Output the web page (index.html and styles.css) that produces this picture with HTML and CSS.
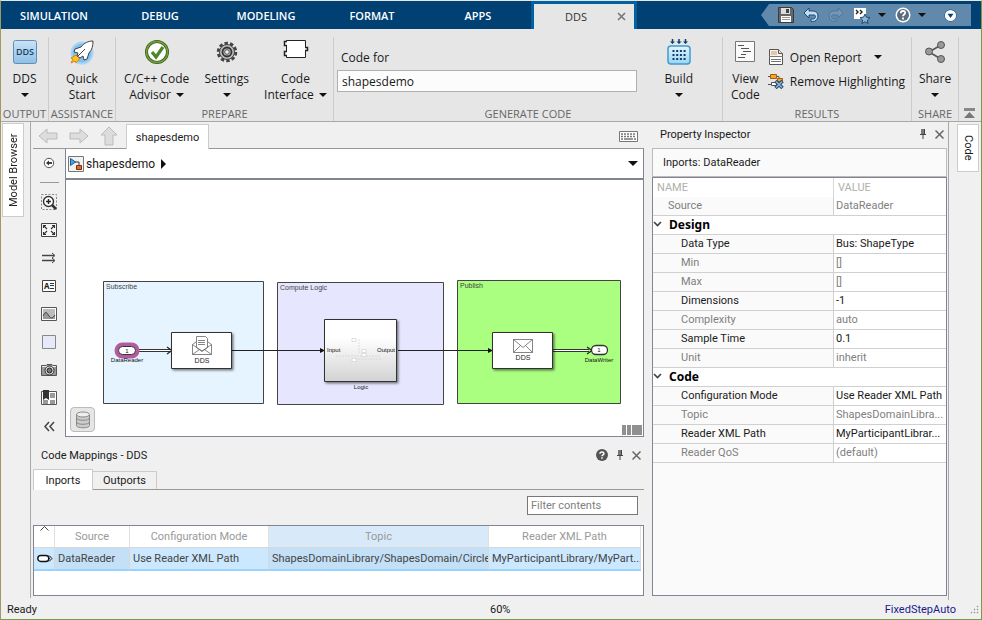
FILE: index.html
```html
<!DOCTYPE html>
<html lang="en">
<head>
    <meta charset="UTF-8">
    <title>shapesdemo</title>
    <link rel="stylesheet" href="styles.css">
</head>
<body>
    <header class="tabstrip">
        <nav class="main-tabs">
            <button class="main-tab">SIMULATION</button>
            <button class="main-tab">DEBUG</button>
            <button class="main-tab">MODELING</button>
            <button class="main-tab">FORMAT</button>
            <button class="main-tab">APPS</button>
            <div class="active-tab">
                <button class="active-name">DDS</button>
                <button class="icon-btn" aria-label="Close tab">
                    <svg width="9" height="9" viewBox="0 0 9 9"><path d="M1 1l7 7M8 1l-7 7" stroke="#777" stroke-width="1.6"/></svg>
                </button>
            </div>
        </nav>
        <div class="quick-access">
            <button class="icon-btn" aria-label="Save">
                <svg width="16" height="16" viewBox="0 0 16 16"><path d="M.5.5h13l2 2v13H.5z" fill="#666" stroke="#3a3a3a"/><path d="M3 1h9v6H3z" fill="#ddd"/><path d="M8 2h3v4H8z" fill="#444"/><path d="M3 9h10v6H3z" fill="#fff"/><path d="M4 10.500h8M4 12.500h8" stroke="#999"/></svg>
            </button>
            <button class="icon-btn" aria-label="Undo">
                <svg width="16" height="16" viewBox="0 0 16 16"><path d="M1 6l5-5v3h4c3 0 5 2 5 5s-2 5.500-5.500 5.500H8V12h1.500c2 0 3-1 3-2.500S11.500 8 10 8H6v3z" fill="#c4dff5" stroke="#1d4a75"/></svg>
            </button>
            <button class="icon-btn" aria-label="Redo">
                <svg width="16" height="16" viewBox="0 0 16 16"><path d="M15 6l-5-5v3H6C3 4 1 6 1 9s2 5.500 5.500 5.500H8V12H6.500c-2 0-3-1-3-2.500S4.500 8 6 8h4v3z" fill="#7397b6" stroke="#4f7699"/></svg>
            </button>
            <button class="icon-btn with-arrow" aria-label="Favorites">
                <svg width="18" height="17" viewBox="0 0 18 17"><path d="M1 1h12v11H1z" fill="#fff"/><path d="M3 3l2 2-2 2M7 3l2 2-2 2" fill="none" stroke="#222" stroke-width="1.400"/><path d="M12 7l1.500 3.200 3.500.4-2.600 2.400.7 3.500-3.100-1.700-3.100 1.700.7-3.500L7 10.600l3.500-.4z" fill="#8fb4d4" stroke="#204a70"/></svg>
                <i class="arrow"></i>
            </button>
            <button class="icon-btn with-arrow" aria-label="Help">
                <svg width="16" height="16" viewBox="0 0 16 16"><circle cx="8" cy="8" r="7.500" fill="#fff"/><circle cx="8" cy="8" r="6" fill="#5a6c80"/><path d="M5.800 6.200c0-3 4.600-2.800 4.400-.2C10.100 7.400 8 7.600 8 9.300M8 10.600v1.800" fill="none" stroke="#fff" stroke-width="1.800"/></svg>
                <i class="arrow"></i>
            </button>
            <button class="icon-btn more" aria-label="More">
                <svg width="13" height="13" viewBox="0 0 13 13"><circle cx="6.500" cy="6.500" r="6" fill="#0a4275"/><circle cx="6.500" cy="6.500" r="4.800" fill="#0a4275" stroke="#fff" stroke-width="1.600"/><circle cx="6.500" cy="6.500" r="4.800" fill="#fff"/><path d="M3.500 4.800h6l-3 4.200z" fill="#0a4275"/></svg>
            </button>
        </div>
    </header>

    <section class="ribbon">
        <div class="group">
            <div class="tools">
                <button class="tool">
                    <svg width="26" height="26" viewBox="0 0 26 26"><defs><linearGradient id="gDds" x1="0" y1="0" x2="0" y2="1"><stop offset="0" stop-color="#c9e4f8"/><stop offset="1" stop-color="#8fbfe4"/></linearGradient></defs><rect x="1.500" y="1.500" width="23" height="23" rx="2" fill="url(#gDds)" stroke="#5f8fb8"/><text x="13" y="16" class="dds-glyph">DDS</text></svg>
                    <span>DDS</span><i class="arrow"></i>
                </button>
            </div>
            <h3>OUTPUT</h3>
        </div>
        <div class="group">
            <div class="tools">
                <button class="tool">
                    <svg width="26" height="26" viewBox="0 0 26 26"><circle cx="13" cy="14" r="10.500" fill="#7fc0ef" stroke="#a9d6f5" stroke-width="2"/><path d="M7 16l-5 3 2 1-2 4 4-2 1 2 4-5z" fill="#ffc61a" stroke="#d9811e"/><path d="M24 2c-5 0-9 2-12 6l-6 2-1 3 4 1-1 3 3 2 3-2 1 4 3-1 2-6c3-3 4-7 4-12z" fill="#fff" stroke="#444"/><path d="M9 17l7-7" stroke="#444"/></svg>
                    <span>Quick</span><span>Start</span>
                </button>
            </div>
            <h3>ASSISTANCE</h3>
        </div>
        <div class="group">
            <div class="tools prepare">
                <button class="tool">
                    <svg width="26" height="26" viewBox="0 0 26 26"><circle cx="13" cy="13" r="10.500" fill="#fff" stroke="#3c5a20" stroke-width="3"/><circle cx="13" cy="13" r="10.500" fill="none" stroke="#6fa336" stroke-width="1.500"/><path d="M8 13l4 5 7-10" fill="none" stroke="#4d8527" stroke-width="3.200"/></svg>
                    <span>C/C++ Code</span><span>Advisor <i class="arrow"></i></span>
                </button>
                <button class="tool">
                    <svg width="26" height="26" viewBox="0 0 26 26"><circle cx="13" cy="13" r="8.500" fill="none" stroke="#444" stroke-width="3.500" stroke-dasharray="3.300 2.040"/><circle cx="13" cy="13" r="7.500" fill="#bbb" stroke="#444"/><circle cx="13" cy="13" r="4.500" fill="#bbb" stroke="#333" stroke-width="1.800"/><circle cx="13" cy="13" r="2.300" fill="#eee" stroke="#555"/></svg>
                    <span>Settings</span><i class="arrow"></i>
                </button>
                <button class="tool">
                    <svg width="26" height="26" viewBox="0 0 26 26"><path d="M3.500 1.500h19v17h-19z" fill="#fff" stroke="#222"/><path d="M4 2.500H1.500v4H4M4 12.500H1.500v4H4M22 8.500h2.500v3H22" fill="#fff" stroke="#222" stroke-width="1.500"/></svg>
                    <span>Code</span><span>Interface <i class="arrow"></i></span>
                </button>
            </div>
            <h3>PREPARE</h3>
        </div>
        <div class="group">
            <div class="tools generate">
                <div class="code-for">
                    <label for="codeFor">Code for</label>
                    <input type="text" id="codeFor" value="shapesdemo">
                </div>
                <button class="tool">
                    <svg width="26" height="26" viewBox="0 0 26 26"><defs><linearGradient id="gBuild" x1="0" y1="0" x2="0" y2="1"><stop offset="0" stop-color="#e4f5ff"/><stop offset="1" stop-color="#9ad4f4"/></linearGradient></defs><rect x="2" y="7" width="22" height="18" rx="3" fill="url(#gBuild)" stroke="#3f9ccc" stroke-width="1.500"/><path d="M6.500 0v4M13 0v4M19.500 0v4" stroke="#0d3e6e" stroke-width="1.500"/><path d="M4 2.500h5L6.500 5zM10.500 2.500h5L13 5zM17 2.500h5L19.500 5z" fill="#0d3e6e"/><path d="M6.500 12h14M6.500 16h14M6.500 20h14" stroke="#0d3e6e" stroke-width="2" stroke-dasharray="2 1.700"/></svg>
                    <span>Build</span><i class="arrow"></i>
                </button>
            </div>
            <h3>GENERATE CODE</h3>
        </div>
        <div class="group">
            <div class="tools results">
                <button class="tool">
                    <svg width="26" height="26" viewBox="0 0 26 26"><path d="M3.500 2.500h19v20h-19z" fill="#fafafa" stroke="#777"/><path d="M6 6.500h6M9 9.500h8M11 12.500h8M9 15.500h5M6 18.500h7" stroke="#555"/></svg>
                    <span>View</span><span>Code</span>
                </button>
                <div class="wide-tools">
                    <button class="wide-tool">
                        <svg width="16" height="16" viewBox="0 0 16 16"><path d="M1.500.5h9l4 4v11h-13z" fill="#f4f4f4" stroke="#555"/><path d="M10.500.5v4h4" fill="#ddd" stroke="#555"/><path d="M3 3h6M3 5h6" stroke="#d99a4e"/><path d="M2 7h12v8H2z" fill="#fff"/><path d="M1 7.500h14M3 10.500h10M3 12.500h10" stroke="#777"/></svg>
                        Open Report <i class="arrow"></i>
                    </button>
                    <button class="wide-tool">
                        <svg width="16" height="16" viewBox="0 0 16 16"><path d="M0 3.500h3M8 3.500h3v4h3M0 11.500h3" fill="none" stroke="#555"/><path d="M2.500 1.500h6v4h-6z" fill="#f5a623" stroke="#a65b12"/><path d="M9.500 5.500h5v3h-5z" fill="#f5a623" stroke="#a65b12"/><path d="M3.500 9.500h5v3h-5z" fill="#fff" stroke="#555"/><path d="M7.500 8l7 7M14.500 8l-7 7" stroke="#23486d" stroke-width="3.500"/><path d="M8 8.500l6 6M14 8.500l-6 6" stroke="#8ab6dc" stroke-width="1.600"/></svg>
                        Remove Highlighting
                    </button>
                </div>
            </div>
            <h3>RESULTS</h3>
        </div>
        <div class="group">
            <div class="tools">
                <button class="tool">
                    <svg width="26" height="26" viewBox="0 0 26 26"><path d="M19 6L7 13l12 7" fill="none" stroke="#555" stroke-width="1.600"/><g fill="#999" stroke="#555"><circle cx="19" cy="6" r="3.500"/><circle cx="7" cy="12.500" r="3.500"/><circle cx="19" cy="20" r="3.500"/></g></svg>
                    <span>Share</span><i class="arrow"></i>
                </button>
            </div>
            <h3>SHARE</h3>
        </div>
        <div class="collapse">
            <button class="icon-btn" aria-label="Minimize toolstrip">
                <svg width="11" height="12" viewBox="0 0 11 12"><path d="M0 1.500h11" stroke="#888" stroke-width="3"/><path d="M0 10l5.500-6L11 10z" fill="#777"/></svg>
            </button>
        </div>
    </section>

    <main class="workspace">
        <aside class="rail rail-left"><button class="side-tab side-tab-up">Model Browser</button></aside>

        <section class="center">
            <div class="nav-row">
                <button class="icon-btn" aria-label="Back"><svg width="20" height="18" viewBox="0 0 20 18"><path d="M1 9l8-7v4h10v6H9v4z" fill="#ddd" stroke="#bbb"/></svg></button>
                <button class="icon-btn" aria-label="Forward"><svg width="20" height="18" viewBox="0 0 20 18"><path d="M19 9l-8-7v4H1v6h10v4z" fill="#ddd" stroke="#bbb"/></svg></button>
                <button class="icon-btn" aria-label="Up to parent"><svg width="18" height="20" viewBox="0 0 18 20"><path d="M9 1l8 8h-4v10H5V9H1z" fill="#ddd" stroke="#bbb"/></svg></button>
                <button class="model-tab">shapesdemo</button>
                <button class="icon-btn keyboard" aria-label="Keyboard shortcuts"><svg width="19" height="11" viewBox="0 0 19 11"><path d="M.5.5h18v10H.5z" fill="#fff" stroke="#777"/><path d="M2 3h15M2 5.500h15" stroke="#777" stroke-width="1.500" stroke-dasharray="2 1"/><path d="M2 8h2M5 8h9M15 8h2" stroke="#777" stroke-width="1.500"/></svg></button>
            </div>

            <div class="editor">
                <div class="palette">
                    <button class="icon-btn" aria-label="Hide browser"><svg width="18" height="18" viewBox="0 0 18 18"><circle cx="9" cy="9" r="4.700" fill="#fff" stroke="#555"/><path d="M6 9l3-2.500v5z" fill="#333"/><path d="M8 9h4" stroke="#333" stroke-width="1.800"/></svg></button>
                    <hr>
                    <button class="icon-btn" aria-label="Zoom"><svg width="18" height="18" viewBox="0 0 18 18"><path d="M1.500 1.500h15v15h-15z" fill="none" stroke="#888" stroke-dasharray="2 1.500"/><circle cx="8.500" cy="8.500" r="5" fill="#fff" stroke="#333" stroke-width="1.400"/><path d="M6 8.500h5M8.500 6v5" stroke="#222" stroke-width="1.400"/><path d="M12 12l4 4" stroke="#333" stroke-width="2.500"/></svg></button>
                    <button class="icon-btn" aria-label="Fit to view"><svg width="18" height="18" viewBox="0 0 18 18"><path d="M1.500 2.500h15v13h-15z" fill="#f6f6f6" stroke="#444"/><path d="M3.500 7V4.500H6M14.500 7V4.500H12M3.500 11v2.500H6M14.500 11v2.500H12M4 5l3 3M14 5l-3 3M4 13l3-3M14 13l-3-3" fill="none" stroke="#333" stroke-width="1.100"/></svg></button>
                    <button class="icon-btn" aria-label="Sample time"><svg width="18" height="18" viewBox="0 0 18 18"><path d="M2 6.500h12M2 11.500h12" stroke="#444" stroke-width="1.300"/><path d="M12 4l3 2.500L12 9M12 9l3 2.500-3 2.500" fill="none" stroke="#444"/></svg></button>
                    <button class="icon-btn" aria-label="Annotation"><svg width="18" height="18" viewBox="0 0 18 18"><path d="M2.500 3.500h13v11h-13z" fill="#fff" stroke="#444"/><text x="4" y="12" class="note-glyph">A</text><path d="M10 6.500h4M10 8.500h4M10 11.500h4" stroke="#333"/></svg></button>
                    <button class="icon-btn" aria-label="Image"><svg width="18" height="18" viewBox="0 0 18 18"><path d="M1.500 2.500h15v13h-15z" fill="#fff" stroke="#555"/><path d="M3 4h12v10H3z" fill="#bbb"/><path d="M3 11c3-6 4-3 6 0s4 2 6-1v4H3z" fill="#999"/><path d="M3 11c3-6 4-3 6 0s4 2 6-1" fill="none" stroke="#444"/></svg></button>
                    <button class="icon-btn" aria-label="Area"><svg width="18" height="18" viewBox="0 0 18 18"><path d="M2.500 2.500h13v13h-13z" fill="#e8e8fb" stroke="#888"/></svg></button>
                    <button class="icon-btn" aria-label="Screenshot"><svg width="18" height="18" viewBox="0 0 18 18"><path d="M1.500 4.500H6l1-1h5l1 1h3.500v10h-15z" fill="#999" stroke="#555"/><path d="M2 5.500h14" stroke="#eee"/><circle cx="9.500" cy="9.500" r="4.500" fill="#ddd" stroke="#333"/><circle cx="9.500" cy="9.500" r="2.500" fill="#777" stroke="#222"/></svg></button>
                    <button class="icon-btn" aria-label="Views"><svg width="18" height="18" viewBox="0 0 18 18"><path d="M1.500 2.500h15v13h-15z" fill="#fff" stroke="#555"/><path d="M10 4h5v5h-5zM10 11h5v4h-5zM3 11h5v4H3z" fill="#999"/><path d="M3 1h6v10l-3-2-3 2z" fill="#333"/></svg></button>
                    <button class="icon-btn" aria-label="Collapse"><svg width="18" height="18" viewBox="0 0 18 18"><path d="M9 5L5 9.500 9 14M14 5l-4 4.500L14 14" fill="none" stroke="#444" stroke-width="1.500"/></svg></button>
                </div>

                <div class="canvas-frame">
                    <div class="path-bar">
                        <svg width="16" height="16" viewBox="0 0 16 16"><path d="M.5.5h15v15H.5z" fill="#f2f2f2" stroke="#777"/><path d="M2.500 2.500v7l5-3.500z" fill="#4aa3df" stroke="#1e5a94"/><path d="M7 6h4v3" fill="none" stroke="#333"/><path d="M8.500 9.500h5v4h-5z" fill="#d9692e" stroke="#7a3210"/></svg>
                        <a href="#">shapesdemo</a>
                        <i class="arrow-right"></i>
                        <button class="icon-btn path-menu" aria-label="Show path"><i class="arrow"></i></button>
                    </div>
                    <div class="canvas">
                        <svg class="diagram" viewBox="66 181 577 255">
                            <defs>
                                <linearGradient id="gBlock" x1="0" y1="0" x2="0" y2="1"><stop offset=".3" stop-color="#fff"/><stop offset="1" stop-color="#d2d2d2"/></linearGradient>
                                <filter id="soft" x="-10%" y="-10%" width="125%" height="125%"><feDropShadow dx="1.500" dy="1.500" stdDeviation="0.800" flood-opacity=".5"/></filter>
                            </defs>
                            <g stroke="#444">
                                <path d="M103.500 281.500h160v122h-160z" fill="#e6f4ff"/>
                                <path d="M277.500 282.500h166v122h-166z" fill="#e6e6ff"/>
                                <path d="M457.500 280.500h163v123h-163z" fill="#aaff80"/>
                            </g>
                            <text x="106" y="289" class="area-name">Subscribe</text>
                            <text x="280" y="290" class="area-name">Compute Logic</text>
                            <text x="460" y="288" class="area-name">Publish</text>

                            <path d="M232 350.500h89M398 350.500h91" stroke="#222"/>
                            <path d="M320 348l5 2.500-5 2.500zM488 348l5 2.500-5 2.500z" fill="#111"/>
                            <path d="M138 349.500h32M138 351.500h32M553 349.500h36M553 351.500h36" stroke="#333"/>
                            <path d="M137 350.500h32M554 350.500h34" stroke="#fff"/>
                            <path d="M167 347l5 3.500-5 3.500M587 347l5 3.500-5 3.500" fill="none" stroke="#222" stroke-width="1.200"/>

                            <g stroke="#333" fill="#fff" filter="url(#soft)">
                                <path d="M171.500 332.500h60v36h-60z"/>
                                <path d="M492.500 332.500h60v36h-60z"/>
                                <path d="M324.500 319.500h72v62h-72z" fill="url(#gBlock)"/>
                            </g>
                            <g fill="#fff" stroke="#666" stroke-width=".8">
                                <path d="M192.500 344.500l9.500-7 9.500 7v10h-19z"/>
                                <path d="M196.500 336.500h9l2 2v9l-5.500 4-5.500-4z"/>
                                <path d="M198 340.500h7M198 342.500h7M198 344.500h7M192.500 344.500l7 5-7 5M211.500 344.500l-7 5 7 5M199 349l3 2 3-2" fill="none"/>
                                <path d="M513.500 339.500h19v13h-19z"/>
                                <path d="M513.500 339.500l9.500 8 9.500-8M513.500 352.500l7-7M532.500 352.500l-7-7" fill="none"/>
                            </g>
                            <text x="202" y="363" class="block-name">DDS</text>
                            <text x="523" y="360" class="block-name">DDS</text>

                            <g fill="#fff" stroke="#ccc" stroke-width=".6">
                                <path d="M359 339v14M336 356h45M355 359h26" stroke-dasharray="2 1"/>
                                <path d="M352 338.500h4v3h-4zM362 349.500h4v3h-4zM362 353.500h4v3h-4zM352 358.500h4v3h-4z"/>
                            </g>
                            <text x="327" y="352" class="port">Input</text>
                            <text x="395" y="352" class="port port-end">Output</text>
                            <text x="361" y="389" class="port port-mid">Logic</text>

                            <rect x="117" y="345" width="20" height="11" rx="5.500" fill="#fff" stroke="#b45aa0" stroke-width="5"/>
                            <rect x="118.500" y="346.500" width="17" height="8" rx="4" fill="#fff" stroke="#333"/>
                            <rect x="591.500" y="345.500" width="16" height="9" rx="4.500" fill="#fff" stroke="#333" stroke-width="1.300"/>
                            <text x="127" y="353" class="port port-mid">1</text>
                            <text x="599" y="352" class="port port-mid">1</text>
                            <text x="127" y="362" class="port port-mid">DataReader</text>
                            <text x="599" y="362" class="port port-mid">DataWriter</text>
                        </svg>
                        <button class="data-btn" aria-label="Model data">
                            <svg width="16" height="18" viewBox="0 0 16 18"><path d="M1.500 3.500v11c0 3 13 3 13 0v-11" fill="#ccc" stroke="#888"/><ellipse cx="8" cy="3.500" rx="6.500" ry="2.500" fill="#eee" stroke="#888"/><path d="M1.500 7c0 3 13 3 13 0M1.500 11c0 3 13 3 13 0" fill="none" stroke="#888"/></svg>
                        </button>
                        <svg class="view-marks" width="20" height="10" viewBox="0 0 20 10"><path d="M0 0h4v10H0zM5 0h4v10H5zM10 0h10v10H10z" fill="#909090"/></svg>
                    </div>
                </div>
            </div>

            <div class="panel-title">
                <h2>Code Mappings - DDS</h2>
                <button class="icon-btn" aria-label="Help"><svg width="12" height="12" viewBox="0 0 12 12"><circle cx="6" cy="6" r="6" fill="#555"/><path d="M4 4.700c0-2.400 4-2.200 3.900-.1C7.800 5.800 6 5.800 6 7.200M6 8.300v1.500" fill="none" stroke="#fff" stroke-width="1.500"/></svg></button>
                <button class="icon-btn" aria-label="Pin"><svg width="8" height="12" viewBox="0 0 8 12"><path d="M2 1h4v5H2z" fill="#777"/><path d="M1 6.500h6M4 7v4M5.500 1v5" stroke="#444"/></svg></button>
                <button class="icon-btn" aria-label="Close"><svg width="9" height="9" viewBox="0 0 9 9"><path d="M.5.5l8 8M8.500.5l-8 8" stroke="#666" stroke-width="1.500"/></svg></button>
            </div>
            <div class="mapping-tabs">
                <button class="mapping-tab selected">Inports</button>
                <button class="mapping-tab">Outports</button>
            </div>
            <div class="filter-row">
                <input type="text" class="filter" placeholder="Filter contents" aria-label="Filter contents">
            </div>
            <div class="mapping-box">
                <table class="mappings">
                    <colgroup><col class="c-icon"><col class="c-source"><col class="c-mode"><col class="c-topic"><col></colgroup>
                    <thead>
                        <tr>
                            <th class="sort"><svg width="9" height="5" viewBox="0 0 9 5"><path d="M.5 4.500l4-4 4 4" fill="none" stroke="#444"/></svg></th>
                            <th>Source</th>
                            <th>Configuration Mode</th>
                            <th class="hot">Topic</th>
                            <th>Reader XML Path</th>
                        </tr>
                    </thead>
                    <tbody>
                        <tr>
                            <td class="port-icon"><svg width="16" height="9" viewBox="0 0 16 9"><rect x=".8" y="1.500" width="11" height="6" rx="3" fill="#fff" stroke="#111" stroke-width="1.400"/><path d="M12 1.500l3 3-3 3M11 3l1.500 1.500L11 6" fill="none" stroke="#111"/></svg></td>
                            <td class="hot">DataReader</td>
                            <td>Use Reader XML Path</td>
                            <td class="hot">ShapesDomainLibrary/ShapesDomain/Circle</td>
                            <td>MyParticipantLibrary/MyPart...</td>
                        </tr>
                    </tbody>
                </table>
            </div>
        </section>

        <section class="inspector">
            <div class="panel-title inspector-title">
                <h2>Property Inspector</h2>
                <button class="icon-btn" aria-label="Pin"><svg width="8" height="12" viewBox="0 0 8 12"><path d="M2 1h4v5H2z" fill="#777"/><path d="M1 6.500h6M4 7v4M5.500 1v5" stroke="#444"/></svg></button>
                <button class="icon-btn" aria-label="Close"><svg width="9" height="9" viewBox="0 0 9 9"><path d="M.5.5l8 8M8.500.5l-8 8" stroke="#666" stroke-width="1.500"/></svg></button>
            </div>
            <div class="object-name">Inports: DataReader</div>
            <div class="prop-box">
                <table class="props">
                    <colgroup><col class="c-name"><col></colgroup>
                    <thead><tr><th>NAME</th><th>VALUE</th></tr></thead>
                    <tbody>
                        <tr class="locked top"><td>Source</td><td>DataReader</td></tr>
                        <tr class="section"><th colspan="2"><svg width="9" height="6" viewBox="0 0 9 6"><path d="M1 1l3.500 3.500L8 1" fill="none" stroke="#444" stroke-width="1.700"/></svg>Design</th></tr>
                        <tr><td>Data Type</td><td>Bus: ShapeType</td></tr>
                        <tr class="locked"><td>Min</td><td>[]</td></tr>
                        <tr class="locked"><td>Max</td><td>[]</td></tr>
                        <tr><td>Dimensions</td><td>-1</td></tr>
                        <tr class="locked"><td>Complexity</td><td>auto</td></tr>
                        <tr><td>Sample Time</td><td>0.1</td></tr>
                        <tr class="locked"><td>Unit</td><td>inherit</td></tr>
                        <tr class="section"><th colspan="2"><svg width="9" height="6" viewBox="0 0 9 6"><path d="M1 1l3.500 3.500L8 1" fill="none" stroke="#444" stroke-width="1.700"/></svg>Code</th></tr>
                        <tr><td>Configuration Mode</td><td>Use Reader XML Path</td></tr>
                        <tr class="locked"><td>Topic</td><td>ShapesDomainLibra...</td></tr>
                        <tr><td>Reader XML Path</td><td>MyParticipantLibrar...</td></tr>
                        <tr class="locked"><td>Reader QoS</td><td>(default)</td></tr>
                    </tbody>
                </table>
            </div>
        </section>

        <aside class="rail rail-right"><button class="side-tab">Code</button></aside>
    </main>

    <footer class="status">
        <span class="message">Ready</span>
        <span class="zoom-level">60%</span>
        <a href="#" class="solver">FixedStepAuto</a>
        <svg width="9" height="9" viewBox="0 0 9 9"><path d="M7 1h1v1H7zM4 4h1v1H4zM7 4h1v1H7zM1 7h1v1H1zM4 7h1v1H4zM7 7h1v1H7z" fill="#999" stroke="#999" stroke-width=".5"/></svg>
    </footer>
</body>
</html>
```

FILE: styles.css
```css
* {
    box-sizing: border-box;
}
body {
    margin: 0;
    min-height: 100vh;
    display: flex;
    flex-direction: column;
    border: 1px solid #7a9a45;
    border-left-color: #a09a5c;
    border-top-color: #e6e6e6;
    background: #f0f0f0;
    color: #1a1a1a;
    font-family: Roboto, "Noto Sans", sans-serif;
    font-size: 11px;
}
button, input {
    font: inherit;
    color: inherit;
}
button {
    background: none;
    border: none;
    padding: 0;
    cursor: pointer;
}
h2, h3 {
    margin: 0;
    font-size: inherit;
    font-weight: normal;
}
svg {
    display: block;
    flex: none;
}
.icon-btn {
    display: flex;
    align-items: center;
    justify-content: center;
}
.arrow {
    display: inline-block;
    border: 4px solid transparent;
    border-top-color: #111;
    border-bottom-width: 0;
}
.arrow-right {
    border: 5px solid transparent;
    border-left-color: #111;
    border-right-width: 0;
}

/* top tabs */
.tabstrip {
    display: flex;
    justify-content: space-between;
    height: 28px;
    background: #004073;
    color: #fff;
    font-family: "Open Sans", sans-serif;
}
.main-tabs {
    display: flex;
}
.main-tab {
    width: 106px;
    font-weight: 600;
}
.active-tab {
    display: flex;
    align-items: center;
    width: 106px;
    padding: 0 8px 0 31px;
    border: 3px solid #0062a0;
    border-bottom: none;
    background: #e6e6e6;
    color: #333;
    justify-content: space-between;
}
.quick-access {
    display: flex;
    align-items: center;
    gap: 9px;
    width: 210px;
    height: 22px;
    margin: 3px 10px 0 0;
    padding: 0 14px 0 17px;
    background: #6189ab;
    clip-path: polygon(8px 0, 100% 0, 100% 100%, 8px 100%, 0 50%);
}
.with-arrow {
    gap: 7px;
}
.more {
    margin-left: auto;
}

/* ribbon */
.ribbon {
    display: grid;
    grid-template-columns: 48px 67px 218px minmax(0, 1fr) 189px 47px 22px;
    height: 93px;
    padding-top: 8px;
    border-bottom: 1px solid #a8a8a8;
    background: #e6e6e6;
    font-family: "Open Sans", sans-serif;
    font-size: 12px;
}
.group {
    display: flex;
    flex-direction: column;
    border-right: 1px solid #ccc;
}
.group h3 {
    color: #666;
    font-size: 11px;
    text-align: center;
    line-height: 14px;
    white-space: nowrap;
}
.tools {
    flex: 1;
    display: flex;
    justify-content: center;
}
.tool {
    display: flex;
    flex-direction: column;
    align-items: center;
    justify-content: flex-start;
    padding-top: 2px;
    line-height: 16px;
    white-space: nowrap;
}
.tool svg {
    margin-bottom: 6px;
}
.tool > .arrow {
    margin-top: 6px;
}
.tool span .arrow {
    margin: 0 0 2px 2px;
}
.dds-glyph {
    font: 600 9px "Open Sans", sans-serif;
    fill: #173f66;
    text-anchor: middle;
}
.prepare {
    justify-content: space-between;
    padding: 0 6px 0 8px;
}
.generate {
    justify-content: space-between;
    padding: 0 29px 0 3px;
}
.code-for {
    flex: 1;
    max-width: 300px;
    padding-top: 12px;
}
.code-for label {
    display: block;
    padding-left: 4px;
    line-height: 18px;
}
.code-for input {
    width: 100%;
    height: 22px;
    margin-top: 3px;
    padding: 0 4px;
    border: 1px solid #b0b0b0;
    background: #fcfcfc;
}
.results {
    justify-content: flex-start;
    padding-left: 8px;
    gap: 8px;
}
.wide-tools {
    padding-top: 8px;
}
.wide-tool {
    display: flex;
    align-items: center;
    gap: 6px;
    height: 24px;
    white-space: nowrap;
}
.wide-tool .arrow {
    margin-left: 6px;
}
.collapse {
    display: flex;
    align-items: flex-end;
    justify-content: center;
    padding: 0 2px 1px 0;
}

/* workspace */
.workspace {
    flex: 1;
    display: grid;
    grid-template-columns: 30px minmax(0, 1fr) 302px 32px;
}
.rail-left {
    margin-bottom: 2px;
    border-right: 1px solid #a8a8a8;
    padding: 1px 0 0 1px;
}
.rail-right {
    padding: 2px 0 0 8px;
}
.side-tab {
    writing-mode: vertical-rl;
    width: 22px;
    height: 48px;
    border: 1px solid #ccc;
    background: #fff;
    text-align: center;
}
.side-tab-up {
    height: 94px;
    transform: rotate(180deg);
}
.center {
    display: flex;
    flex-direction: column;
    min-width: 0;
    padding: 0 3px 4px 2px;
}
.nav-row {
    display: flex;
    align-items: center;
    gap: 11px;
    height: 27px;
    padding: 2px 6px 0 5px;
    border-bottom: 1px solid #999;
}
.model-tab {
    align-self: stretch;
    width: 83px;
    margin: 0 0 -1px -3px;
    border: 1px solid #ccc;
    border-bottom: none;
    background: #fff;
}
.keyboard {
    margin-left: auto;
}
.editor {
    flex: 1;
    display: flex;
}
.palette {
    display: flex;
    flex-direction: column;
    gap: 10px;
    align-items: center;
    width: 32px;
    padding-top: 5px;
}
.palette hr {
    width: 19px;
    margin: 0;
    border: none;
    border-top: 1px solid #999;
}
.note-glyph {
    font: bold 8px "Noto Sans", sans-serif;
    fill: #222;
}
.canvas-frame {
    flex: 1;
    display: flex;
    flex-direction: column;
    min-width: 0;
    border: 1px solid #808591;
    border-top: none;
    background: #fff;
}
.path-bar {
    display: flex;
    align-items: center;
    gap: 2px;
    height: 31px;
    padding: 0 5px 0 2px;
    border-bottom: 2px solid #808591;
    font-size: 12px;
}
.path-bar a {
    color: #1a1a1a;
    text-decoration: none;
}
.path-bar .arrow-right {
    margin-left: 4px;
}
.path-menu {
    margin-left: auto;
}
.path-menu .arrow {
    border-width: 5px 5px 0;
}
.canvas {
    position: relative;
    flex: 1;
    display: flex;
    align-items: flex-end;
}
.diagram {
    width: 100%;
    font-family: "Liberation Sans", Arial, sans-serif;
}
.area-name {
    font-size: 7px;
    fill: #444;
}
.block-name {
    font-size: 7px;
    fill: #222;
    text-anchor: middle;
}
.port {
    font-size: 6px;
    fill: #111;
}
.port-mid {
    text-anchor: middle;
}
.port-end {
    text-anchor: end;
}
.data-btn {
    position: absolute;
    left: 4px;
    bottom: 4px;
    width: 25px;
    height: 25px;
    padding: 3px 4px;
    border: 1px solid #bbb;
    border-radius: 4px;
    background: #e6e6e6;
}
.view-marks {
    position: absolute;
    right: 1px;
    bottom: 1px;
}

/* code mappings */
.panel-title {
    display: flex;
    align-items: center;
    gap: 8px;
    height: 32px;
    padding: 4px 3px 0 8px;
}
.panel-title h2 {
    flex: 1;
}
.mapping-tabs {
    display: flex;
    align-items: flex-end;
    height: 21px;
    border-bottom: 1px solid #999;
}
.mapping-tab {
    width: 64px;
    height: 18px;
    border: 1px solid #ccc;
    border-left: none;
    border-bottom: none;
}
.mapping-tab.selected {
    width: 60px;
    height: 21px;
    margin-bottom: -1px;
    border-left: 1px solid #ccc;
    background: #fff;
}
.filter-row {
    display: flex;
    justify-content: flex-end;
    padding: 6px 6px 10px;
}
.filter {
    width: 111px;
    height: 19px;
    padding: 0 3px;
    border: 1px solid #777;
    background: #fff;
}
.filter::placeholder {
    color: #808080;
}
.mapping-box {
    height: 71px;
    padding-right: 2px;
    border: 1px solid #808591;
    background: #fff;
}
table {
    width: 100%;
    table-layout: fixed;
    border-collapse: separate;
    border-spacing: 0;
}
th {
    font-weight: normal;
}
th, td {
    padding: 0;
    overflow: hidden;
    white-space: nowrap;
}
.c-icon {
    width: 21px;
}
.c-source {
    width: 75px;
}
.c-mode {
    width: 139px;
}
.c-topic {
    width: 220px;
}
.mappings th {
    height: 22px;
    border-right: 1px solid #e0e0e0;
    border-bottom: 1px solid #d8d8d8;
    color: #999;
}
.mappings th.hot {
    background: #d8eaf9;
}
.mappings th.sort {
    vertical-align: top;
}
.sort svg {
    margin: 0 auto;
}
.mappings td {
    height: 23px;
    padding-left: 3px;
    border-right: 1px solid #d8d8d8;
    border-bottom: 2px solid #99d1ff;
    background: #cce8ff;
    color: #444;
}
.mappings td.hot {
    background: #c4e0f7;
}

/* property inspector */
.inspector {
    display: flex;
    flex-direction: column;
    padding: 0 1px 4px 5px;
    border-right: 1px solid #a8a8a8;
}
.inspector-title {
    height: 26px;
    padding-top: 0;
    padding-bottom: 2px;
}
.object-name {
    height: 29px;
    padding-left: 10px;
    border: 1px solid #bbb;
    background: #fafafa;
    line-height: 28px;
}
.prop-box {
    flex: 1;
    border: 1px solid #808591;
    background: #fafafa;
}
.c-name {
    width: 181px;
}
.props {
    line-height: 18px;
}
.props td {
    height: 19px;
    padding-left: 28px;
    border-right: 1px solid #d0d0d0;
    border-bottom: 1px solid #d0d0d0;
}
.props td:last-child {
    padding-left: 2px;
    border-right: none;
    background: #fff;
}
.props .top td:first-child {
    padding-left: 15px;
}
.props .locked {
    color: #808080;
}
.props thead th {
    height: 19px;
    padding-left: 4px;
    background: #fff;
    color: #b0b0a8;
    text-align: left;
}
.props thead th:first-child {
    border-right: 1px solid #d8d8d8;
}
.props .section th {
    height: 19px;
    border-bottom: 1px solid #d0d0d0;
    background: #fff;
    color: #000;
    font-family: "Noto Sans", sans-serif;
    font-size: 12px;
    font-weight: bold;
    text-align: left;
}
.section svg {
    display: inline-block;
    margin: 0 7px 2px 0;
}

/* status bar */
.status {
    display: flex;
    align-items: center;
    height: 19px;
    padding-right: 2px;
}
.message {
    width: 50%;
    padding-left: 6px;
}
.zoom-level {
    flex: 1;
}
.solver {
    margin-right: 14px;
    color: #1a1a8c;
    text-decoration: none;
}
```
